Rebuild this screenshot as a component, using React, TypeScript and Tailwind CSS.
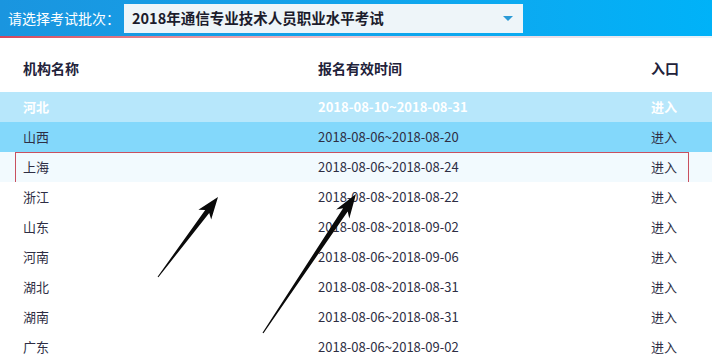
import React from 'react';

type Row = { name: string; range: string; tone?: 'active' | 'hover' | 'marked' };

const rows: Row[] = [
  { name: '河北', range: '2018-08-10~2018-08-31', tone: 'active' },
  { name: '山西', range: '2018-08-06~2018-08-20', tone: 'hover' },
  { name: '上海', range: '2018-08-06~2018-08-24', tone: 'marked' },
  { name: '浙江', range: '2018-08-08~2018-08-22' },
  { name: '山东', range: '2018-08-08~2018-09-02' },
  { name: '河南', range: '2018-08-06~2018-09-06' },
  { name: '湖北', range: '2018-08-08~2018-08-31' },
  { name: '湖南', range: '2018-08-06~2018-08-31' },
  { name: '广东', range: '2018-08-06~2018-09-02' },
];

const rowBg = (tone?: Row['tone']) => {
  if (tone === 'active') return 'bg-[#b7e7fb] text-white font-bold';
  if (tone === 'hover') return 'bg-[#83d8fb] text-[#2e2e44]';
  if (tone === 'marked') return 'bg-[#f2fafe] text-[#2e2e44]';
  return 'bg-white text-[#2e2e44]';
};

// annotation arrows drawn over the table
const Arrows = () => (
  <svg className="pointer-events-none absolute left-0 top-0" width="712" height="357" viewBox="0 0 712 357">
    <polygon
      fill="#0a0a0a"
      points="218,197 211.2,219.4 209.2,212.9 158.4,277.3 157.6,276.7 205.2,209.9 198.4,209.8"
    />
    <polygon
      fill="#0a0a0a"
      points="356,194 349.3,218.4 347.7,211.4 263.5,333.3 262.5,332.7 343.1,208.2 336.1,209.5"
    />
  </svg>
);

export default function App() {
  return (
    <div className="relative h-[357px] w-[712px] overflow-hidden bg-white font-['Noto_Sans_CJK_SC','Noto_Sans',sans-serif]">
      {/* exam batch picker */}
      <div className="flex h-[36px] items-center bg-gradient-to-r from-[#1a95df] to-[#00b2f8] pl-[8px]">
        <span className="w-[116px] shrink-0 whitespace-nowrap text-[14px] leading-[20px] text-white">请选择考试批次：</span>
        <div className="flex h-[29px] w-[399px] shrink-0 items-center justify-between bg-[#eef5f9] pl-[8px] pr-[10px]">
          <span className="whitespace-nowrap text-[14.5px] font-bold leading-[20px] text-[#1c1c2c]">2018年通信专业技术人员职业水平考试</span>
          <span className="h-0 w-0 border-x-[5px] border-t-[5px] border-x-transparent border-t-[#2a9ad6]" />
        </div>
      </div>
      <div className="h-[2px] bg-gradient-to-r from-[#d4465c] via-[#eec6d0] to-[#e6f4fb]" />

      {/* header */}
      <div className="grid h-[54px] grid-cols-[295px_333px_1fr] pl-[23px] pt-[20px] text-[14px] font-bold leading-[20px] text-[#22223a]">
        <span>机构名称</span>
        <span>报名有效时间</span>
        <span>入口</span>
      </div>

      {/* rows */}
      <div className="flex flex-col">
        {rows.map(r => (
          <div key={r.name} className={`relative h-[30px] ${rowBg(r.tone)}`}>
            {r.tone === 'marked' && (
              <div className="absolute left-[15px] top-0 h-[31px] w-[674px] border border-[#c8505f]" />
            )}
            <div className="grid h-full grid-cols-[295px_333px_1fr] items-center pl-[23px] text-[13px] leading-[18px]">
              <span>{r.name}</span>
              <span>{r.range}</span>
              <span>进入</span>
            </div>
          </div>
        ))}
      </div>

      <Arrows />
    </div>
  );
}
